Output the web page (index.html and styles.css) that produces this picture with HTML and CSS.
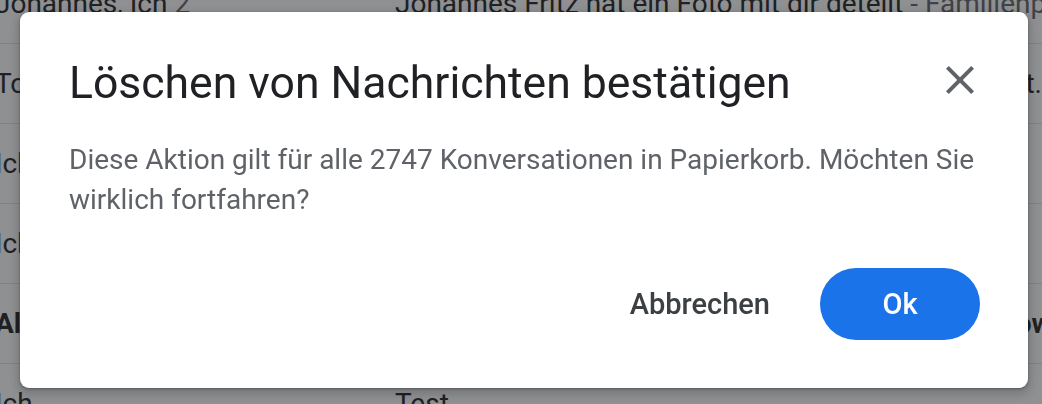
FILE: index.html
```html
<!DOCTYPE html>
<html lang="de">
<head>
<meta charset="utf-8">
<title>Löschen bestätigen</title>
<link rel="stylesheet" href="styles.css">
</head>
<body>
<div class="list">
  <div class="row">
    <span class="sender">Johannes, Ich <span class="count">2</span></span>
    <span class="subject">Johannes Fritz hat ein Foto mit dir geteilt <span class="snippet">- Familienpost vom Wochenende</span></span>
  </div>
  <div class="row">
    <span class="sender">Tom</span>
    <span class="subject"></span>
    <span class="tail">t.</span>
  </div>
  <div class="row">
    <span class="sender">Ich</span>
    <span class="subject"></span>
  </div>
  <div class="row">
    <span class="sender">Ich</span>
    <span class="subject"></span>
  </div>
  <div class="row unread">
    <span class="sender">Alex</span>
    <span class="subject"></span>
    <span class="tail tail-cut">ow</span>
  </div>
  <div class="row">
    <span class="sender">Ich</span>
    <span class="subject">Test</span>
  </div>
</div>
<div class="scrim"></div>
<div class="dialog" role="dialog">
  <div class="dialog-header">
    <h1 class="dialog-title">Löschen von Nachrichten bestätigen</h1>
    <button class="close" aria-label="Schließen">
      <svg viewBox="0 0 24 24" width="48" height="48"><path d="M19 6.41L17.59 5 12 10.59 6.41 5 5 6.41 10.59 12 5 17.59 6.41 19 12 13.41 17.59 19 19 17.59 13.41 12z" fill="currentColor"/></svg>
    </button>
  </div>
  <p class="dialog-body">Diese Aktion gilt für alle 2747 Konversationen in Papierkorb. Möchten Sie wirklich fortfahren?</p>
  <div class="dialog-actions">
    <button class="btn btn-text">Abbrechen</button>
    <button class="btn btn-primary">Ok</button>
  </div>
</div>
</body>
</html>
```
FILE: styles.css
```css
html, body {
  margin: 0;
  padding: 0;
  width: 1042px;
  height: 404px;
  overflow: hidden;
  background: #ffffff;
  font-family: Roboto, "Noto Sans", Arial, sans-serif;
}

.list {
  margin-top: -36px;
  height: 440px;
  overflow: hidden;
}

.row {
  display: flex;
  align-items: center;
  height: 80px;
  border-bottom: 1px solid #e3e3e3;
  box-sizing: border-box;
  font-size: 28px;
  color: #202124;
  overflow: hidden;
  white-space: nowrap;
}

.sender {
  flex: 0 0 400px;
  margin-left: -5px;
}

.count {
  color: #5f6368;
}

.subject {
  flex: 1 1 auto;
  overflow: hidden;
}

.snippet {
  color: #5f6368;
}

.tail {
  flex: 0 0 auto;
}

.tail-cut {
  margin-right: -10px;
}

.unread {
  font-weight: 700;
}

.scrim {
  position: fixed;
  inset: 0;
  background: rgba(32, 33, 36, 0.5);
}

.dialog {
  position: absolute;
  left: 20px;
  top: 12px;
  width: 1008px;
  height: 376px;
  box-sizing: border-box;
  padding: 43px 44px 48px 49px;
  background: #ffffff;
  border-radius: 9px;
  box-shadow: 0 1px 3px rgba(0, 0, 0, 0.3), 0 4px 8px 3px rgba(0, 0, 0, 0.15);
  display: flex;
  flex-direction: column;
}

.dialog-header {
  display: flex;
  align-items: center;
  justify-content: space-between;
}

.dialog-title {
  margin: 0;
  font-size: 44.5px;
  line-height: 56px;
  font-weight: 400;
  color: #202124;
}

.close {
  border: 0;
  padding: 0;
  background: none;
  color: #5f6368;
  width: 48px;
  height: 48px;
  margin-top: -6px;
}

.close svg {
  display: block;
}

.dialog-body {
  margin: 29px 0 0;
  font-size: 28px;
  line-height: 40px;
  color: #5f6368;
}

.dialog-actions {
  margin-top: auto;
  margin-right: 4px;
  display: flex;
  justify-content: flex-end;
  align-items: center;
  gap: 26px;
}

.btn {
  border: 0;
  font-family: inherit;
  font-size: 29px;
  font-weight: 500;
  height: 72px;
  border-radius: 36px;
  cursor: pointer;
}

.btn-text {
  background: none;
  color: #3c4043;
  padding: 0 24px 0 20px;
}

.btn-primary {
  background: #1a73e8;
  color: #ffffff;
  width: 160px;
}
```
